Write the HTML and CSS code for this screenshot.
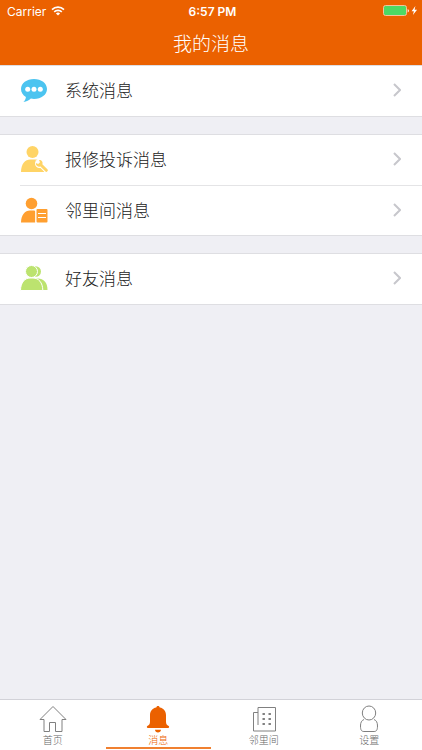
FILE: index.html
```html
<!DOCTYPE html>
<html lang="zh-CN">
<head>
<meta charset="utf-8">
<meta name="viewport" content="width=device-width, initial-scale=1">
<title>我的消息</title>
<link rel="stylesheet" href="styles.css">
</head>
<body>
<header class="header">
  <div class="status">
    <div class="status-left">
      <span>Carrier</span>
      <svg width="14" height="10" viewBox="0 0 14 10" fill="none" stroke="#fff" stroke-width="1.6" aria-hidden="true">
        <path d="M1 3.6a8.6 8.6 0 0 1 12 0"/><path d="M3.2 5.9a5.4 5.4 0 0 1 7.6 0"/><path d="M7 9.6 4.900 7.500a3 3 0 0 1 4.200 0z" fill="#fff" stroke="none"/>
      </svg>
    </div>
    <time class="clock">6:57 PM</time>
    <div class="status-right">
      <svg width="35" height="12" viewBox="0 0 35 12" aria-hidden="true">
        <rect x="0.5" y="0.5" width="23" height="10" rx="2" fill="#4cd964" stroke="#f6c29a"/>
        <path d="M24.700 4v3.400c1.600-.4 1.600-3 0-3.400z" fill="#fff"/>
        <path d="M32.400 1 28.600 6.200h2.300L29.900 10l4.200-5.200h-2.500z" fill="#fff"/>
      </svg>
    </div>
  </div>
  <h1 class="title">我的消息</h1>
</header>

<main class="content">
  <nav class="group" aria-label="系统">
    <a class="row" href="#system">
      <svg class="icon" viewBox="0 0 28 28" aria-hidden="true">
        <path d="M14 3C6.700 3 1 7.300 1 13c0 3.400 1.900 6.200 4.900 8-.2 1.900-1 3.600-2.500 5 3.300-.2 5.600-1.500 7.500-3.400 1 .2 2 .3 3.100.3 7.300 0 13-4.200 13-9.900S21.300 3 14 3z" fill="#4cc4f0"/>
        <circle cx="7.700" cy="13.200" r="2.500" fill="#fff"/><circle cx="14" cy="13.200" r="2.500" fill="#fff"/><circle cx="20.300" cy="13.200" r="2.500" fill="#fff"/>
      </svg>
      <span class="label">系统消息</span>
      <svg class="chevron" viewBox="0 0 8 14" aria-hidden="true"><path d="M1 1l6 6-6 6"/></svg>
    </a>
  </nav>

  <nav class="group" aria-label="物业与邻里">
    <a class="row" href="#repair">
      <svg class="icon" viewBox="0 0 28 28" aria-hidden="true">
        <g fill="#ffd466"><circle cx="12.500" cy="7" r="6"/><path d="M1 27c0-8 4-12.500 9.500-12.500h5c5 0 8.500 4 9 12.500z"/></g>
        <path d="M20 19l7 7" stroke="#fff" stroke-width="5"/>
        <circle cx="19.500" cy="18.500" r="4.500" fill="#fff"/>
        <path d="M20.500 19.500l5.800 5.800" stroke="#ffd466" stroke-width="3" stroke-linecap="round"/>
        <path d="M19 15l1 2.300-1.800 1.800-2.300-1c-.3 2.400 1.800 4.200 4.100 3.400l2.400-2.400c.8-2.300-1-4.400-3.400-4.100z" fill="#ffd466"/>
      </svg>
      <span class="label">报修投诉消息</span>
      <svg class="chevron" viewBox="0 0 8 14" aria-hidden="true"><path d="M1 1l6 6-6 6"/></svg>
    </a>
    <a class="row" href="#neighbour">
      <svg class="icon" viewBox="0 0 28 28" aria-hidden="true">
        <g fill="#ff9f30"><circle cx="11.500" cy="7.500" r="5.800"/><path d="M1 26.500c0-7.500 4-12 9-12h3.500c1 0 1.600.2 1.600 1v11z"/><rect x="16.500" y="13" width="11" height="13.500" rx="1"/></g>
        <path d="M18 17.500h8M18 21.500h8" stroke="#fff"/>
      </svg>
      <span class="label">邻里间消息</span>
      <svg class="chevron" viewBox="0 0 8 14" aria-hidden="true"><path d="M1 1l6 6-6 6"/></svg>
    </a>
  </nav>

  <nav class="group" aria-label="好友">
    <a class="row" href="#friends">
      <svg class="icon" viewBox="0 0 28 28" aria-hidden="true">
        <g fill="#bce36f">
          <circle cx="15.700" cy="7.500" r="5.300"/><path d="M10 26c0-7 3-11.500 8-11.500 5.500 0 9.500 4 9.500 11.500z"/>
          <g stroke="#fff"><circle cx="11.500" cy="7.500" r="6"/><path d="M.5 26.500c0-8 4.500-12.500 9.500-12.500h3c5.500 0 9.800 4.500 9.800 12.500z"/></g>
        </g>
      </svg>
      <span class="label">好友消息</span>
      <svg class="chevron" viewBox="0 0 8 14" aria-hidden="true"><path d="M1 1l6 6-6 6"/></svg>
    </a>
  </nav>
</main>

<nav class="tabs" aria-label="主导航">
  <a class="tab" href="#home">
    <svg class="tab-icon" viewBox="0 0 28 28" aria-hidden="true"><path d="M14 1.500 1 14.500h4V26.500h5.500v-9h6v9H23v-12h4z"/></svg>
    <span>首页</span>
  </a>
  <a class="tab active" href="#messages" aria-current="page">
    <svg class="tab-icon" viewBox="0 0 28 28" aria-hidden="true"><path d="M14 1c-1 0-1.600.6-1.700 1.500C8.200 3.200 6 6.300 6 10.300v6.500c0 2.200-.9 3.500-2.700 4.300-.8.600-.5 2 .6 2h20.200c1.100 0 1.400-1.400.6-2-1.800-.8-2.700-2.100-2.700-4.300v-6.500c0-4-2.200-7.100-6.300-7.800C15.600 1.600 15 1 14 1zM11 24.800h6c-.2 1.700-1.300 2.700-3 2.700s-2.800-1-3-2.700z"/></svg>
    <span>消息</span>
  </a>
  <a class="tab" href="#nearby">
    <svg class="tab-icon" viewBox="0 0 28 28" aria-hidden="true"><path d="M8 20V2.500h17.500v23.500H3.500V7.500H8"/><path d="M12.500 9h2.400M18.500 9h2.400M12.500 14h2.400M18.500 14h2.400M12.500 19h2.400M18.500 19h2.400" stroke-width="2.200"/></svg>
    <span>邻里间</span>
  </a>
  <a class="tab" href="#settings">
    <svg class="tab-icon" viewBox="0 0 28 28" aria-hidden="true"><ellipse cx="14" cy="8" rx="6.700" ry="7"/><path d="M9 14.500c-2.500 1-3.500 3-3.500 6.500 0 4 1 5.500 3.500 5.500h10c2.500 0 3.500-1.500 3.500-5.500 0-3.500-1-5.500-3.500-6.500"/></svg>
    <span>设置</span>
  </a>
</nav>
</body>
</html>
```
FILE: styles.css
```css
* {
  box-sizing: border-box;
}

body {
  margin: 0;
  min-height: 100vh;
  display: flex;
  flex-direction: column;
  background: #efeff4;
  color: #222;
  font-family: "Noto Sans CJK SC", sans-serif;
  font-weight: 300;
}

a {
  color: inherit;
  text-decoration: none;
}

.header {
  background: #eb6100;
  color: #fff;
}

.status {
  display: grid;
  grid-template-columns: 1fr auto 1fr;
  align-items: center;
  height: 22px;
  padding: 0 4px 0 7px;
  font-family: Inter, sans-serif;
  font-size: 12px;
  font-weight: 400;
}

.status-left {
  display: flex;
  align-items: center;
  gap: 5px;
}

.status-right {
  display: flex;
  justify-content: flex-end;
}

.clock {
  font-weight: 600;
}

.title {
  margin: 0;
  height: 43px;
  font-size: 19px;
  font-weight: 300;
  line-height: 42px;
  text-align: center;
}

.content {
  flex: 1;
  display: flex;
  flex-direction: column;
  gap: 17px;
}

.group {
  background: #fff;
  border-top: 1px solid #dedee2;
  border-bottom: 1px solid #dedee2;
}

.row {
  display: flex;
  align-items: center;
  height: 50px;
  margin-left: 20px;
  padding: 0 21px 2px 0;
}

.row + .row {
  border-top: 1px solid #e4e4e6;
}

.icon {
  width: 28px;
  height: 28px;
}

.label {
  flex: 1;
  margin-left: 17px;
  font-size: 17px;
  line-height: 24px;
}

.chevron {
  width: 8px;
  height: 14px;
  fill: none;
  stroke: #c7c7cc;
  stroke-width: 2;
}

.tabs {
  display: grid;
  grid-template-columns: repeat(4, 1fr);
  height: 51px;
  border-top: 1px solid #d2d2d8;
  background: #fff;
}

.tab {
  display: flex;
  flex-direction: column;
  align-items: center;
  margin-bottom: 1px;
  padding-top: 5px;
  border-bottom: 2px solid transparent;
  color: #666;
  font-size: 10px;
  line-height: 14px;
}

.tab-icon {
  width: 28px;
  height: 28px;
  fill: none;
  stroke: #808080;
  stroke-width: 1;
}

.active {
  border-color: #f08030;
  color: #eb6100;
}

.active .tab-icon {
  fill: #eb6100;
  stroke: none;
}
```
